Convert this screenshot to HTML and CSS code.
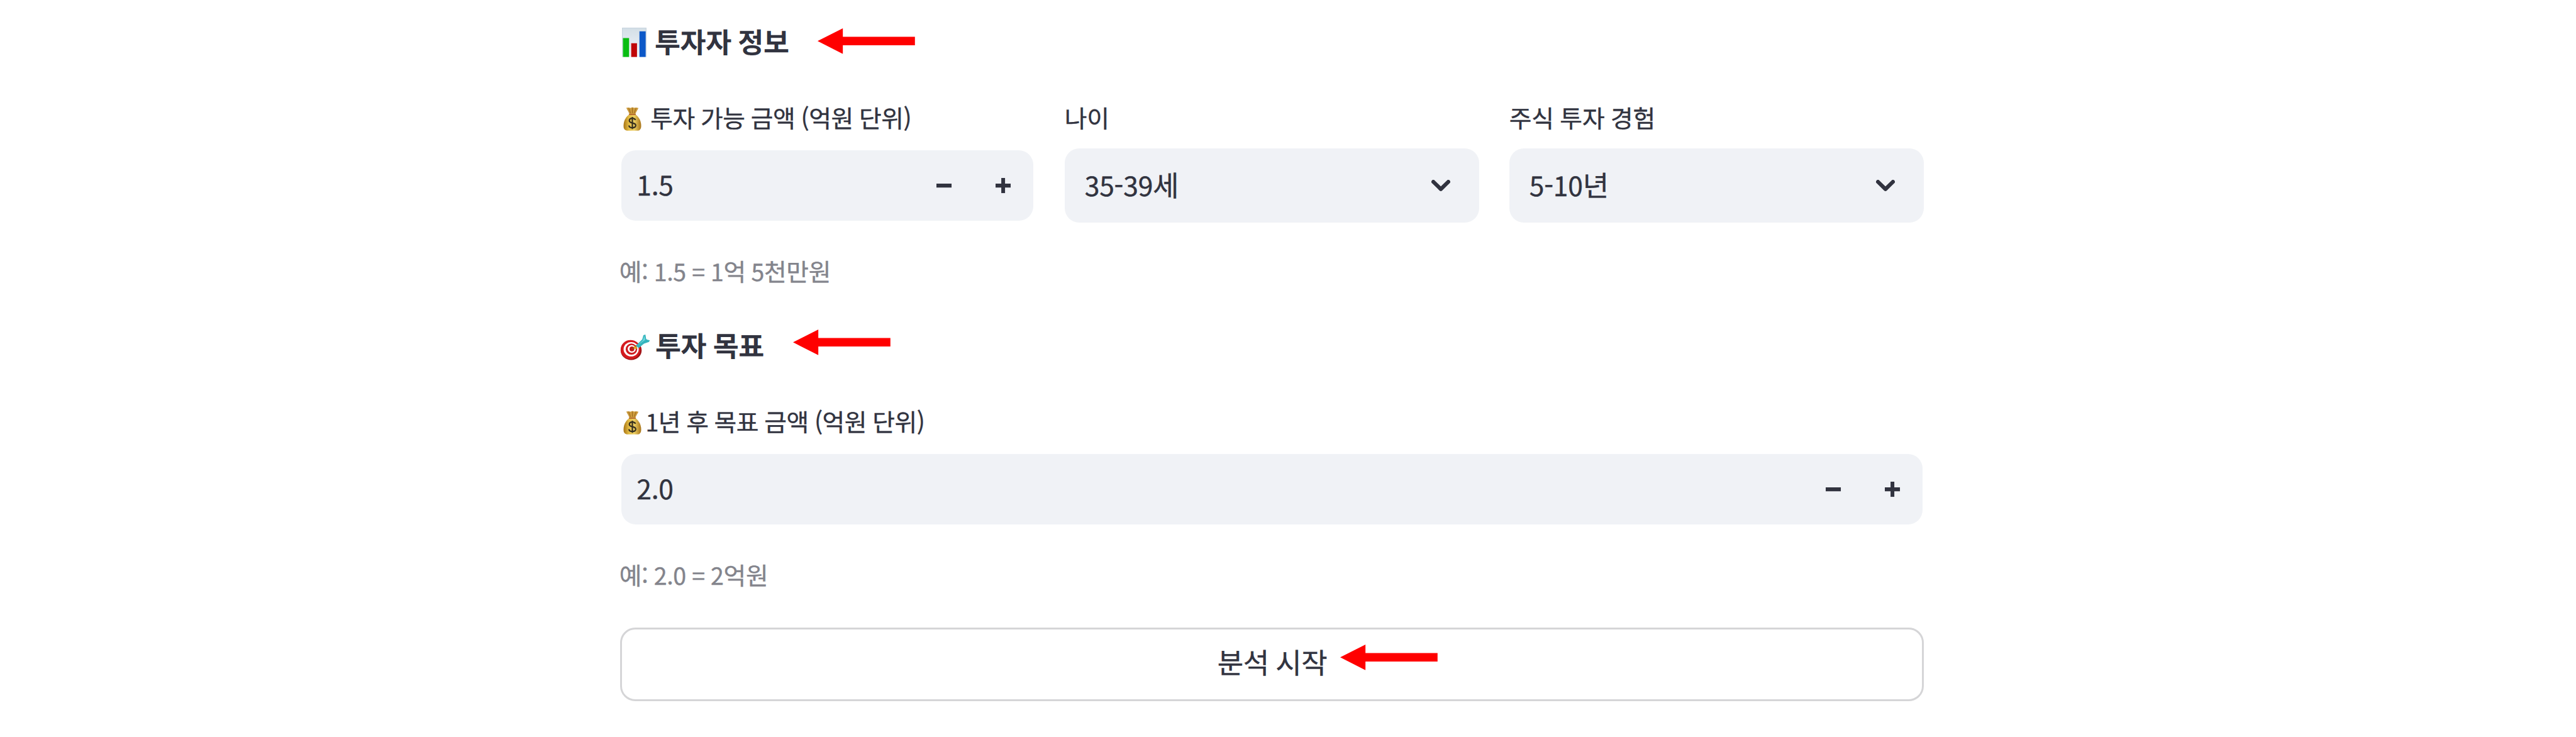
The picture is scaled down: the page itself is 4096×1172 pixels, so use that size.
FILE: index.html
```html
<!DOCTYPE html>
<html lang="ko">
<head>
<meta charset="utf-8">
<title>투자자 정보</title>
<link rel="stylesheet" href="styles.css">
</head>
<body>
<svg class="defs" aria-hidden="true">
  <defs>
    <linearGradient id="gold" x1="0" x2="1" y1="0" y2="0">
      <stop offset="0" stop-color="#a87414"/><stop offset=".3" stop-color="#e3bc45"/>
      <stop offset=".6" stop-color="#edd063"/><stop offset="1" stop-color="#a8741a"/>
    </linearGradient>
    <linearGradient id="paper" x1="0" x2="0" y1="0" y2="1">
      <stop offset="0" stop-color="#d3dee6"/><stop offset="1" stop-color="#f0f5fa"/>
    </linearGradient>
    <symbol id="bag" viewBox="0 0 30 39">
      <path d="M5 1.500 9 .8l3 .8L15 .3l3 1.200 3-.7 4 .9c-1.500 3.500-4 6.500-5 10H10C9 8 6.500 5 5 1.500Z" fill="#cc9a3c"/>
      <path d="m9 2 3 8M15 1.500V10M21 2l-3 8" stroke="#94631c" stroke-width="1" fill="none"/>
      <path d="M10 12h10c4 3 9.500 9 9.500 19 0 6-2.500 8-7 8h-15C3 39 .5 37 .5 31 .5 21 6 15 10 12Z" fill="url(#gold)"/>
      <path d="M10 12.300h10" stroke="#a8521b" stroke-width="1.600" stroke-linecap="round"/>
      <path d="M20 21.500c-.6-2-2.400-3-5-3-3 0-5 1.400-5 3.800 0 5.600 10.500 2.500 10.500 7.900 0 2.500-2.200 4-5.400 4-3.200 0-5.300-1.400-5.800-3.900M15 16.300v20" fill="none" stroke="#37301f" stroke-width="2.300"/>
    </symbol>
    <symbol id="arrow" viewBox="0 0 160 42">
      <path d="M0 21 41.500 0v14H160v14H41.500v14Z" fill="#f00"/>
    </symbol>
    <symbol id="minus" viewBox="0 0 25 25"><path d="M0 9.200h25v6.600H0z" fill="#31333f"/></symbol>
    <symbol id="plus" viewBox="0 0 25 25"><path d="M9.400 0h6.200v9.200H25v6.600h-9.400V25H9.400v-9.200H0V9.200h9.400z" fill="#31333f"/></symbol>
    <symbol id="chevron" viewBox="0 0 31 19"><path d="m3.200 3.200 12.300 12 12.300-12" fill="none" stroke="#31333f" stroke-width="6.400" stroke-linecap="round" stroke-linejoin="round"/></symbol>
  </defs>
</svg>
<main class="form">
  <section class="group">
    <h3 class="heading">
      <svg class="icon-chart" viewBox="0 0 40 48">
        <rect width="40" height="48" fill="url(#paper)"/>
        <path d="M.5 48V.5h39V48" fill="none" stroke="#c6d3dd"/>
        <rect x="1.500" y="17" width="10" height="31" fill="#09bd12"/>
        <rect x="15" y="25.500" width="9.500" height="22.500" fill="#c00508"/>
        <rect x="28.500" y="6" width="10.200" height="42" fill="#0c58c8"/>
      </svg>
      <span class="title">투자자 정보</span>
      <svg class="arrow arrow-info"><use href="#arrow"/></svg>
    </h3>
    <div class="columns">
      <div class="field">
        <label class="label label-amount"><svg class="icon-bag"><use href="#bag"/></svg><span>투자 가능 금액 (억원 단위)</span></label>
        <div class="number"><span class="value">1.5</span><svg class="step"><use href="#minus"/></svg><svg class="step"><use href="#plus"/></svg></div>
        <p class="caption">예<span class="latin">: 1.5 = 1</span>억 <span class="latin">5</span>천만원</p>
      </div>
      <div class="field">
        <label class="label">나이</label>
        <div class="select"><span class="value"><span class="latin">35-39</span>세</span><svg class="chevron"><use href="#chevron"/></svg></div>
      </div>
      <div class="field">
        <label class="label">주식 투자 경험</label>
        <div class="select"><span class="value"><span class="latin">5-10</span>년</span><svg class="chevron"><use href="#chevron"/></svg></div>
      </div>
    </div>
  </section>
  <section class="group">
    <h3 class="heading heading-goal">
      <svg class="icon-target" viewBox="0 0 49 43">
        <ellipse cx="18" cy="26.500" rx="17.500" ry="16" fill="#9d1216"/>
        <ellipse cx="17" cy="25" rx="16.500" ry="15.800" fill="#d51a1f"/>
        <ellipse cx="18" cy="24.500" rx="12.600" ry="12" fill="#fff"/>
        <ellipse cx="18.500" cy="24.300" rx="9.600" ry="9.300" fill="#cf1b20"/>
        <ellipse cx="19" cy="24" rx="6.700" ry="6.500" fill="#fff"/>
        <ellipse cx="19.300" cy="24" rx="4" ry="4" fill="#c4171b"/>
        <path d="m19.500 24 8-6" stroke="#8a5a16" stroke-width="1.600"/>
        <path d="m23.500 18.500 5.500 4.500-5 1-1.500-2z" fill="#e3ad25"/>
        <path d="M26 18.500 36.500 8 38.500 1l3.300-1 1.200 7.300 1.400 1 4.800 1.500-1.500 2.500-8.300 3L30.500 22.500Z" fill="#35b4bd"/>
        <path d="m28 18.500 9.500-8.500L40 2l1.500 7Z" fill="#6fd8dd"/>
      </svg>
      <span class="title">투자 목표</span>
      <svg class="arrow arrow-goal"><use href="#arrow"/></svg>
    </h3>
    <div class="field">
      <label class="label label-goal"><svg class="icon-bag"><use href="#bag"/></svg><span><span class="latin">1</span>년 후 목표 금액 (억원 단위)</span></label>
      <div class="number"><span class="value">2.0</span><svg class="step"><use href="#minus"/></svg><svg class="step"><use href="#plus"/></svg></div>
      <p class="caption">예<span class="latin">: 2.0 = 2</span>억원</p>
    </div>
  </section>
  <button class="submit">분석 시작<svg class="arrow arrow-submit"><use href="#arrow"/></svg></button>
</main>
</body>
</html>
```
FILE: styles.css
```css
* { box-sizing: border-box; }
body {
  margin: 0;
  background: #fff;
  color: #31333f;
  font-family: "Noto Sans CJK KR", "Noto Sans", sans-serif;
  text-rendering: geometricPrecision;
}
svg { display: block; flex: none; overflow: visible; }
.defs { position: absolute; width: 0; height: 0; }
.form {
  width: 2073.500px;
  margin-left: 985.700px;
  padding-top: 22px;
}
.group { height: 483px; }
.heading {
  position: relative;
  display: flex;
  align-items: center;
  height: 90px;
  margin: 0;
  padding-left: 3.500px;
  font-size: 44.600px;
  font-weight: 700;
  line-height: 66px;
  letter-spacing: -.4px;
  word-spacing: -1.500px;
}
.title { padding-bottom: 4.400px; }
.icon-chart { width: 39px; height: 46.600px; margin-right: 12.700px; }
.heading-goal { padding-left: 0; }
.icon-target { width: 47.500px; height: 41px; margin: 5px 8.700px 0 0; }
.columns { display: grid; grid-template-columns: repeat(3, 1fr); gap: 47.600px; }
.field { display: flex; flex-direction: column; padding-top: 52.500px; }
.label, .caption, .value, .submit { -webkit-text-stroke: .4px currentColor; }
.label {
  display: flex;
  align-items: center;
  height: 48px;
  margin-bottom: 23.800px;
  padding-bottom: 2.400px;
  font-size: 38.800px;
  line-height: 48px;
  letter-spacing: -.15px;
  word-spacing: -1.200px;
  white-space: nowrap;
}
.label-amount { letter-spacing: -.42px; }
.label-goal { letter-spacing: -.46px; }
.icon-bag { width: 29px; height: 38px; margin: 2.400px 14px 0 5.500px; }
.label-goal .icon-bag { margin-right: 6.200px; }
.label .latin, .caption .latin { font-size: 37.500px; }
.number, .select {
  display: flex;
  align-items: center;
  background: #f0f2f6;
  border-radius: 23px;
  font-size: 45px;
}
.number {
  height: 112px;
  margin: 2.900px 2.500px;
  padding: 0 35.200px 0 24px;
  gap: 70px;
}
.select { height: 117.800px; padding: 0 46px 0 32px; }
.value {
  flex: 1;
  padding-bottom: 3px;
  line-height: 60px;
  letter-spacing: -.2px;
  white-space: nowrap;
}
.number .value, .select .latin { font-size: 42.600px; }
.step { width: 24.200px; height: 24.200px; }
.chevron { width: 30px; height: 18.400px; }
.caption {
  height: 48px;
  margin: 52.600px 0 0 -.9px;
  color: #83848c;
  font-size: 38.800px;
  line-height: 48px;
  letter-spacing: -.3px;
  word-spacing: -2px;
  white-space: pre;
}
.caption .latin { word-spacing: -.9px; }
.submit {
  position: relative;
  display: flex;
  align-items: center;
  justify-content: center;
  width: 100%;
  height: 117.300px;
  margin-top: 8.700px;
  padding: 0 0 9.600px 1px;
  border: 3px solid #d5d5d7;
  border-radius: 24px;
  background: #fff;
  color: inherit;
  font: 45px/60px "Noto Sans CJK KR", sans-serif;
  letter-spacing: -.5px;
  word-spacing: -1.500px;
  text-rendering: inherit;
}
.group + .submit { margin-top: 9.700px; }
.arrow { position: absolute; width: 154.900px; height: 40.700px; }
.arrow-info { left: 314.200px; top: 22.500px; }
.arrow-goal { left: 275.500px; top: 18.800px; }
.arrow-submit { left: 1142.300px; top: 24.700px; }
```
